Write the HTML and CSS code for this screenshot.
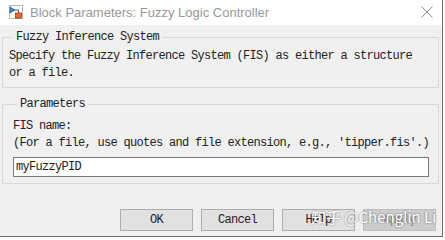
FILE: index.html
```html
<!DOCTYPE html>
<html lang="en">
<head>
  <meta charset="UTF-8">
  <title>Block Parameters: Fuzzy Logic Controller</title>
  <link rel="stylesheet" href="styles.css">
</head>
<body>
  <div class="window">
    <div class="titlebar">
      <svg class="app-icon" width="14" height="14" viewBox="0 0 14 14">
        <rect x="0.5" y="0.5" width="13" height="13" fill="#fff" stroke="#b8b8b8"/>
        <path d="M1 2 L6 5 L1 8 Z" fill="#2f8fd8" stroke="#1c5f9c" stroke-width="0.8"/>
        <path d="M6 5 H9.5 V8" fill="none" stroke="#555" stroke-width="1"/>
        <rect x="6.5" y="8" width="6" height="5" fill="#ee6a2a" stroke="#a33a10" stroke-width="0.8"/>
      </svg>
      <span class="title">Block Parameters: Fuzzy Logic Controller</span>
      <svg class="close" width="12" height="12" viewBox="0 0 12 12">
        <path d="M0.5 0.5 L11.5 11.5 M11.5 0.5 L0.5 11.5" stroke="#8c8c8c" stroke-width="1"/>
      </svg>
    </div>

    <div class="content">
      <fieldset class="group desc">
        <legend>Fuzzy Inference System</legend>
        <p>Specify the Fuzzy Inference System (FIS) as either a structure<br>or a file.</p>
      </fieldset>

      <fieldset class="group params">
        <legend>Parameters</legend>
        <p>FIS name:<br>(For a file, use quotes and file extension, e.g., 'tipper.fis'.)</p>
        <input type="text" class="field" value="myFuzzyPID">
      </fieldset>

      <div class="buttons">
        <button>OK</button>
        <button>Cancel</button>
        <button>Help</button>
        <button class="disabled">Apply</button>
      </div>
    </div>

    <div class="watermark">知乎 @Chenglin Li</div>
  </div>
</body>
</html>
```

FILE: styles.css
```css
body { margin: 0; background: #fff; }
.window { position: relative; width: 442px; height: 236px; border-right: 1px solid #707070; border-bottom: 1px solid #707070; background: #f0f0f0; font-family: "Liberation Mono", monospace; font-size: 12px; letter-spacing: -0.7px; color: #222; overflow: hidden; }

.titlebar { height: 25px; background: #fff; display: flex; align-items: center; padding-left: 9px; }
.app-icon { margin-top: -2px; }
.title { margin-left: 7px; font-family: "Liberation Sans", sans-serif; font-size: 13px; letter-spacing: 0; color: #999; }
.close { margin-left: auto; margin-right: 9px; margin-top: -2px; }

.content { display: flex; flex-direction: column; }
.group { border: 1px solid #d9d9d9; margin: 0 3px 0 2px; padding: 0 8px; min-width: 0; }
.group legend { padding: 0 3px; margin-left: 4px; line-height: 14px; }
.group p { margin: 0; line-height: 17px; white-space: nowrap; }
.desc { margin-top: 5px; padding: 4px 6px 5px 6px; }
.params { margin-top: 9px; padding: 7px 10px 6px 10px; }

.field { display: block; box-sizing: border-box; width: 416px; height: 20px; margin: 5px 0 0 0; padding: 0 2px; border: 1px solid #7a7a7a; background: #fff; font-family: "Liberation Mono", monospace; font-size: 12px; letter-spacing: -0.7px; color: #222; outline: none; }

.buttons { display: flex; justify-content: flex-end; gap: 8px; margin-top: 25px; padding-right: 6px; }
.buttons button { width: 73px; height: 22px; padding: 0; background: #e1e1e1; border: 1px solid #adadad; font-family: "Liberation Mono", monospace; font-size: 12px; letter-spacing: -0.7px; color: #222; }
.buttons .disabled { background: #cccccc; border-color: #bfbfbf; color: #8a8a8a; }

.watermark { position: absolute; left: 311px; top: 206px; font-family: "Noto Sans CJK SC", "Noto Sans", sans-serif; font-size: 15px; letter-spacing: 0; color: #fff; text-shadow: 0 0 2px rgba(0,0,0,0.55); white-space: nowrap; }
```
